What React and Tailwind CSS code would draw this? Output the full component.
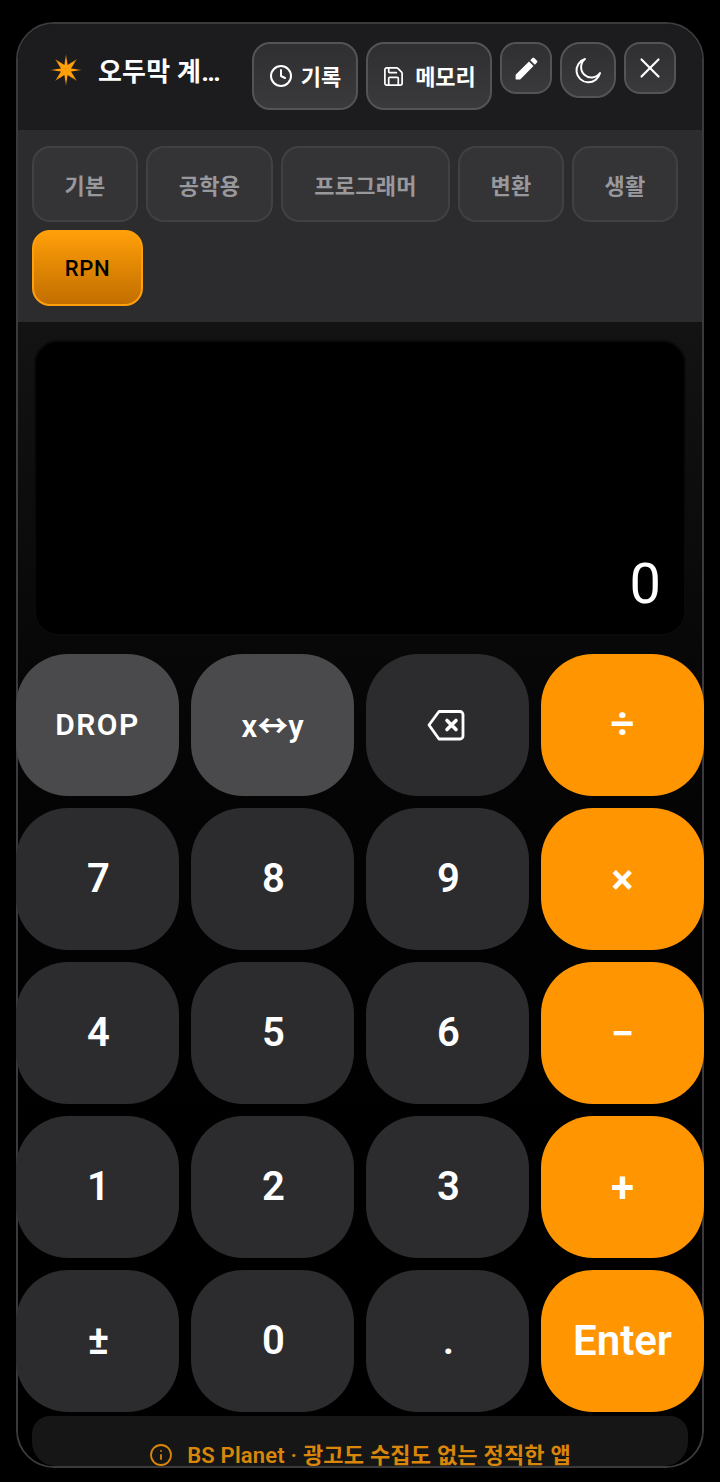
import { Clock, Save, X, Info } from 'lucide-react'

const FONT = 'font-["Roboto","Noto_Sans_CJK_KR",sans-serif]'

const modes = [
    { label: '기본', w: 'w-[106px]' },
    { label: '공학용', w: 'w-[127px]' },
    { label: '프로그래머', w: 'w-[169px]' },
    { label: '변환', w: 'w-[106px]' },
    { label: '생활', w: 'w-[106px]' },
]

const keys = [
    { label: 'DROP', kind: 'fn', cls: 'text-[30px] font-medium tracking-[1.5px] pb-0.5' },
    { label: 'x↔y', kind: 'fn', cls: 'text-[31px] pt-1' },
    { icon: true, kind: 'num', cls: 'pr-1' },
    { label: '÷', kind: 'op', cls: 'text-[42px] pb-1' },
    { label: '7' }, { label: '8' }, { label: '9' }, { label: '×', kind: 'op', cls: 'text-[42px]' },
    { label: '4' }, { label: '5' }, { label: '6' }, { label: '−', kind: 'op', cls: 'text-[42px]' },
    { label: '1' }, { label: '2' }, { label: '3' }, { label: '+', kind: 'op', cls: 'text-[42px]' },
    { label: '±' }, { label: '0' }, { label: '.' }, { label: 'Enter', kind: 'op', cls: 'text-[42px] pb-0.5' },
]

function Spark() {
    return (
        <svg width="32" height="32" viewBox="0 0 32 32">
            <defs>
                <radialGradient id="spark" cx="50%" cy="50%" r="50%">
                    <stop offset="0%" stopColor="#ff9f0a" />
                    <stop offset="60%" stopColor="#ff9f0a" />
                    <stop offset="100%" stopColor="#8a5a10" />
                </radialGradient>
            </defs>
            <path
                fill="url(#spark)"
                d="M16 0 L17.6 11 L27 5 L21 14.4 L32 16 L21 17.6 L27 27 L17.6 21 L16 32 L14.4 21 L5 27 L11 17.6 L0 16 L11 14.4 L5 5 L14.4 11 Z"
            />
        </svg>
    )
}

function Pencil() {
    return (
        <svg width="29" height="29" viewBox="0 0 24 24" fill="#fff">
            <path d="M3 17.25V21h3.75L17.81 9.94l-3.75-3.75L3 17.25zM20.71 7.04a1 1 0 0 0 0-1.41l-2.34-2.34a1 1 0 0 0-1.41 0l-1.83 1.83 3.75 3.75 1.83-1.83z" />
        </svg>
    )
}

function Crescent() {
    return (
        <svg width="28" height="28" viewBox="0 0 24 24" fill="none" stroke="#fff" strokeWidth="1.7" strokeLinejoin="round">
            <path d="M9.4 2.6A8.9 8.9 0 1 0 22.3 14.6A10.2 10.2 0 1 1 9.4 2.6Z" />
        </svg>
    )
}

function Backspace() {
    return (
        <svg width="40" height="32" viewBox="0 0 40 32" fill="none" stroke="#fff" strokeLinecap="round" strokeLinejoin="round">
            <path strokeWidth="2.8" d="M13 2.5H34a3 3 0 0 1 3 3V27a3 3 0 0 1-3 3H13L3 16Z" />
            <path strokeWidth="3.6" d="M21 11.5L30 20.5M30 11.5L21 20.5" />
        </svg>
    )
}

function HeaderButton({ className, children }) {
    return (
        <button className={`shrink-0 flex items-center justify-center border-2 border-[#545456] bg-gradient-to-b from-[#2f2f31] to-[#3a3a3c] text-white ${className}`}>
            {children}
        </button>
    )
}

function Key({ k }) {
    const bg = k.kind === 'fn' ? 'bg-[#4a4a4c]' : k.kind === 'op' ? 'bg-[#ff9500]' : 'bg-[#2c2c2e]'
    return (
        <button className={`h-[142px] rounded-[52px] flex items-center justify-center text-white font-semibold ${bg} ${k.cls || 'text-[40px] pl-0.5'}`}>
            {k.icon ? <Backspace /> : k.label}
        </button>
    )
}

export default function App() {
    return (
        <div className={`${FONT} w-[720px] h-[1482px] bg-black pt-[22px] px-4`}>
            <div className="h-[1446px] border-2 border-[#3a3a3c] rounded-[38px] bg-black">
                {/* Header */}
                <div className="h-[106px] rounded-t-[36px] bg-[#1c1c1e] flex items-start pt-[18px] pl-[32px]">
                    <div className="mt-[12px] shrink-0"><Spark /></div>
                    <div className="ml-[16px] w-[124px] mt-[14px] pb-1 text-[26px] tracking-[0.2px] leading-[32px] font-bold text-white whitespace-nowrap overflow-hidden text-ellipsis">오두막 계산기</div>
                    <HeaderButton className="ml-[30px] w-[106px] h-[68px] rounded-[18px] gap-[8px] text-[22px] font-bold">
                        <Clock size={24} strokeWidth={2} />
                        <span className="pt-0.5">기록</span>
                    </HeaderButton>
                    <HeaderButton className="ml-2 w-[126px] h-[68px] rounded-[18px] gap-[10px] text-[22px] font-bold">
                        <Save size={23} strokeWidth={1.8} />
                        <span className="pt-0.5">메모리</span>
                    </HeaderButton>
                    <HeaderButton className="ml-2 w-[52px] h-[52px] rounded-[16px]">
                        <Pencil />
                    </HeaderButton>
                    <HeaderButton className="ml-2 w-[56px] h-[56px] rounded-[20px]">
                        <Crescent />
                    </HeaderButton>
                    <HeaderButton className="ml-2 w-[52px] h-[52px] rounded-[16px]">
                        <X size={34} strokeWidth={1.5} />
                    </HeaderButton>
                </div>

                {/* Mode tabs */}
                <div className="h-[192px] bg-[#2c2c2e] pt-4 pl-[14px] flex flex-col gap-2">
                    <div className="flex gap-2">
                        {modes.map(m => (
                            <button key={m.label} className={`${m.w} h-[76px] pt-1 rounded-[18px] border-2 border-[#414143] bg-[#343436] text-[#98989d] text-[22px] tracking-[0.3px] font-semibold`}>
                                {m.label}
                            </button>
                        ))}
                    </div>
                    <button className="w-[111px] h-[76px] rounded-[18px] border-2 border-[#ff9f0a] bg-gradient-to-b from-[#ff9f0a] to-[#c26e00] text-black text-[22px] tracking-[0.6px] font-medium">
                        RPN
                    </button>
                </div>

                <div className="h-[1144px] rounded-b-[36px] bg-gradient-to-b from-[#131313] to-black">
                    {/* Display */}
                    <div className="pt-[18px] px-4">
                        <div className="h-[296px] rounded-[24px] bg-black border-2 border-[#0a0a0a] flex items-end justify-end pr-[23px] pb-[17px] text-white text-[56px] leading-[66px] font-normal">
                            0
                        </div>
                    </div>

                    {/* Keypad */}
                    <div className="-mx-[2px] mt-[18px] grid grid-cols-4 gap-3">
                        {keys.map((k, i) => <Key key={i} k={k} />)}
                    </div>

                    {/* Footer */}
                    <div className="mx-[14px] mt-1 h-[50px] rounded-t-[18px] rounded-b-[24px] bg-[#161616] flex items-start justify-center gap-[14px] pt-[27px] text-[#d9860a] text-[22px] tracking-[0.2px] leading-[26px] font-semibold overflow-hidden">
                        <Info size={24} strokeWidth={1.8} />
                        BS Planet · 광고도 수집도 없는 정직한 앱
                    </div>
                </div>
            </div>
        </div>
    )
}
